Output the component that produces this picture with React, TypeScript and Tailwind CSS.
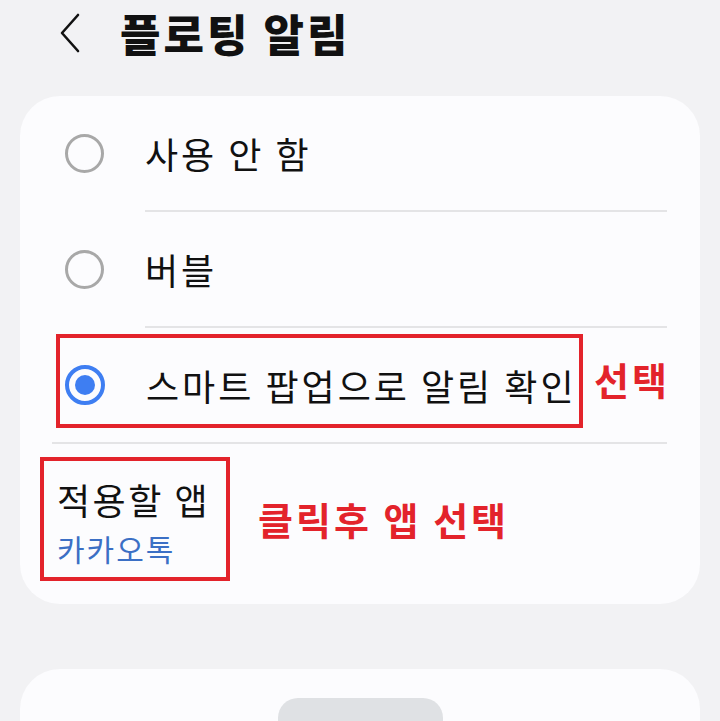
import { ReactNode } from "react";

function Radio({ checked }: { checked?: boolean }) {
  if (checked) {
    return (
      <div className="w-[40px] h-[40px] rounded-full border-[4px] border-[#3e7ef2] flex items-center justify-center shrink-0">
        <div className="w-[20px] h-[20px] rounded-full bg-[#3e7ef2]" />
      </div>
    );
  }
  return <div className="w-[39px] h-[39px] rounded-full border-[3px] border-[#a8a8a8] shrink-0" />;
}

function OptionRow({ label, checked, children }: { label: string; checked?: boolean; children?: ReactNode }) {
  return (
    <div className="relative h-[114px] flex items-center pl-[45px]">
      <Radio checked={checked} />
      <span className="ml-[41px] text-[36px] leading-none text-[#111] tracking-[3px]">{label}</span>
      {children}
    </div>
  );
}

export default function App() {
  return (
    <div className="min-h-screen w-[720px] h-[721px] overflow-hidden bg-[#f2f2f4] font-['Noto_Sans_CJK_KR','Noto_Sans',sans-serif]">
      <div className="h-[66px] flex items-center pl-[58px]">
        <svg width="24" height="40" viewBox="0 0 24 40" className="mr-[38px]">
          <path d="M20 2 L4 20 L20 38" fill="none" stroke="#111" strokeWidth="2.6" strokeLinecap="round" strokeLinejoin="round" />
        </svg>
        <h1 className="text-[44px] leading-none font-black text-[#111] tracking-[3px]">플로팅 알림</h1>
      </div>

      <div className="mt-[30px] mx-[20px] rounded-[40px] bg-[#fcfcfe]">
        <OptionRow label="사용 안 함" />
        <div className="ml-[125px] mr-[33px] h-[2px] bg-[#e4e4e6]" />
        <OptionRow label="버블" />
        <div className="ml-[125px] mr-[33px] h-[2px] bg-[#e4e4e6]" />
        <OptionRow label="스마트 팝업으로 알림 확인" checked>
          <div className="absolute left-[36px] top-[6px] w-[527px] h-[94px] border-[4px] border-[#e3232b]" />
          <span className="absolute left-[574px] top-[32px] text-[38px] leading-none font-bold text-[#e3232b] tracking-[3px]">선택</span>
        </OptionRow>
        <div className="ml-[32px] mr-[33px] h-[2px] bg-[#e4e4e6]" />
        <div className="relative h-[160px] flex items-start pl-[37px]">
          <div className="mt-[37px] flex flex-col">
            <span className="text-[36px] leading-none text-[#111] tracking-[2.5px]">적용할 앱</span>
            <span className="mt-[16px] text-[30px] leading-none text-[#3b6fc5] tracking-[2px]">카카오톡</span>
          </div>
          <div className="absolute left-[20px] top-[13px] w-[190px] h-[124px] border-[4px] border-[#e3232b]" />
          <span className="ml-[48px] mt-[56px] text-[38px] leading-none font-bold text-[#e3232b] tracking-[3px]">클릭후 앱 선택</span>
        </div>
      </div>

      <div className="mt-[65px] mx-[20px] h-[120px] rounded-[40px] bg-[#fcfcfe] flex justify-center pt-[29px]">
        <div className="w-[165px] h-[60px] rounded-t-[20px] bg-[#dfe1e4]" />
      </div>
    </div>
  );
}
